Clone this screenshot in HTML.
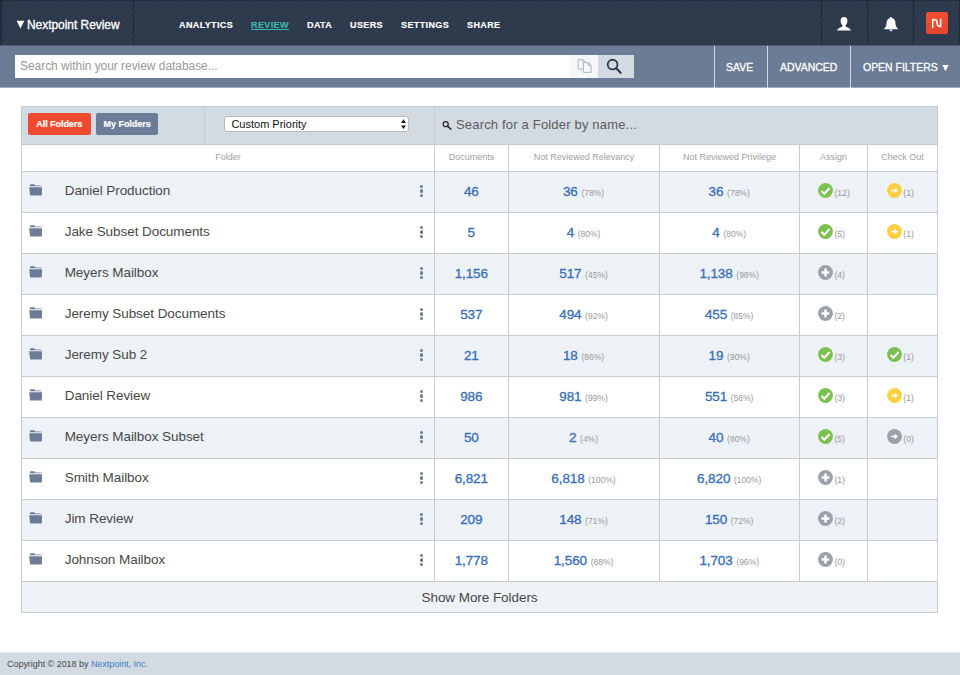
<!DOCTYPE html>
<html>
<head>
<meta charset="utf-8">
<title>Nextpoint Review</title>
<style>
*{box-sizing:border-box;margin:0;padding:0}
html,body{width:960px;height:675px;overflow:hidden;background:#fff;font-family:"Liberation Sans",sans-serif;color:#444}
body{position:relative}
#topbar{position:absolute;left:0;top:0;width:960px;height:46px;background-color:#2f3b4e;overflow:hidden}
#topbar .stripes{position:absolute;left:0;top:0;width:960px;height:46px}
#topbar .edge-t{position:absolute;left:0;top:0;width:960px;height:1px;background:rgba(20,26,36,.4)}
#topbar .edge-l{position:absolute;left:0;top:0;width:2px;height:46px;background:rgba(20,26,36,.45)}
#topbar .edge-b{position:absolute;left:0;top:45px;width:960px;height:1px;background:#4d5a70}
#topbar .div{position:absolute;top:0;width:1px;height:45px;background:rgba(22,29,40,.55)}
#brand{position:absolute;left:27px;top:16.5px;font-size:13px;line-height:16px;color:#fff;white-space:nowrap;-webkit-text-stroke:.35px #fff;transform:scaleX(.915);transform-origin:0 0}
#brand b{font-size:10px;letter-spacing:0;margin-right:3px;position:relative;top:-1px;-webkit-text-stroke:0}
.nav{position:absolute;top:19.6px;-webkit-text-stroke:.15px;font-size:9px;line-height:11px;font-weight:bold;color:#fff;letter-spacing:.38px;white-space:nowrap}
.nav.on{color:#3fb8af;text-decoration:underline;text-underline-offset:1px}
#searchbar{position:absolute;left:0;top:46px;width:960px;height:42px;background:#6d7c96}
#searchbar .edge-b{position:absolute;left:0;top:41px;width:960px;height:1px;background:#a4aebe}
#sinput{position:absolute;left:15px;top:9px;width:554px;height:23px;background:#fff;font-size:12px;line-height:23px;color:#999;padding-left:5px;white-space:nowrap;letter-spacing:-.05px}
#scopy{position:absolute;left:569px;top:9px;width:29px;height:23px;background:#f6f7f8}
#sbtn{position:absolute;left:598px;top:9px;width:36px;height:23px;background:#d2dbe2}
.sdiv{position:absolute;top:0;width:1px;height:42px;background:#d3d8e0}
.sb{position:absolute;top:14px;font-size:11px;line-height:14px;color:#fff;white-space:nowrap;-webkit-text-stroke:.3px #fff;transform:scaleX(.95);transform-origin:0 0}
#tool{position:absolute;left:21px;top:106px;width:917px;height:39px;background:#d2dbe2;border:1px solid #c6c9cd}
.vl{position:absolute;width:1px;background:#c9cbce}
.hl{position:absolute;height:1px;background:#c9cbce}
.btn{position:absolute;top:112.5px;height:22px;border-radius:2px;color:#fff;font-size:9px;font-weight:bold;line-height:22px;text-align:center;white-space:nowrap;letter-spacing:-.05px;-webkit-text-stroke:.2px #fff}
#sel{position:absolute;left:224.4px;top:116px;width:184.6px;height:15.6px;background:#fff;border:1px solid #b9b9b9;border-radius:3px;font-size:11px;line-height:14px;color:#111;padding-left:6px}
#fsearch{position:absolute;left:456px;top:116px;font-size:13px;line-height:18px;color:#5c5c5c;white-space:nowrap;letter-spacing:.18px}
.hd{position:absolute;top:144px;height:26px;font-size:9px;line-height:26px;color:#a0a0a0;text-align:center;white-space:nowrap}
.row{position:absolute;left:21px;width:917px;height:42px;border:1px solid #c9cbce;border-bottom:none}
.row.odd{background:#edf2f7}
.row .name{position:absolute;left:42.7px;top:10px;font-size:13.5px;line-height:17px;color:#484848;white-space:nowrap;letter-spacing:-.06px}
.row .c{position:absolute;top:0;height:40px;line-height:39px;text-align:center;white-space:nowrap;font-size:13.5px;color:#3a6eb5;letter-spacing:-.1px;-webkit-text-stroke:.32px #3a6eb5}
.row .c small{font-size:8.5px;color:#999;letter-spacing:0;-webkit-text-stroke:0}
.row .n{position:absolute;top:15.5px;font-size:8.7px;line-height:11px;color:#999;white-space:nowrap}
.row .ic{position:absolute;top:11px}
.c1{left:412.3px;width:74px}.c2{left:486px;width:151px}.c3{left:637.2px;width:140px}
.h0{left:22px;width:412px}.h1{left:435px;width:73px}.h2{left:509px;width:150px}.h3{left:660px;width:139px}.h4{left:800px;width:67px}.h5{left:868px;width:69px}
.fold{position:absolute;left:6.9px;top:12.2px}
.dots{position:absolute;left:397.5px;top:12.7px;width:3px}
.dots i{display:block;width:3.1px;height:3.1px;border-radius:50%;background:#6d7c96;margin-bottom:1.64px}
#more{position:absolute;left:21px;top:581px;width:917px;height:32px;background:#edf2f7;border:1px solid #c9cbce;text-align:center;font-size:13.5px;line-height:32.6px;color:#484848;letter-spacing:-.06px}
#foot{position:absolute;left:0;top:652px;width:960px;height:23px;background:#d2dbe2;font-size:9px;line-height:24px;color:#484848;padding-left:7px;white-space:nowrap;letter-spacing:-.04px}
#foot span{color:#417bbf}
</style>
</head>
<body>
<svg width="0" height="0" style="position:absolute">
<defs>
<pattern id="stripe" width="6" height="6" patternUnits="userSpaceOnUse" patternTransform="translate(3,0)"><path d="M-1 7 L7 -1 M-1 1 L1 -1 M5 7 L7 5" stroke="#1f2836" stroke-opacity=".45" stroke-width="1"/></pattern>
<g id="i-check"><circle cx="7.5" cy="7.5" r="7.4" fill="#7cc04f"/><path d="M3.5 8 L6.3 10.7 L11.6 5" fill="none" stroke="#fff" stroke-width="2"/></g>
<g id="i-plus"><circle cx="7.5" cy="7.5" r="7.4" fill="#9ba1a9"/><path d="M7.5 3.6 V11.4 M3.6 7.5 H11.4" fill="none" stroke="#fff" stroke-width="2.4"/></g>
<g id="i-arrow"><circle cx="7.5" cy="7.5" r="7.4" fill="#fdcf41"/><path d="M4.1 7.5 H8.6" stroke="#fff" stroke-width="1.6"/><path d="M7.6 4.7 L11.1 7.5 L7.6 10.3 Z" fill="#fff"/></g>
<g id="i-garrow"><circle cx="7.5" cy="7.5" r="7.4" fill="#9ba1a9"/><path d="M4.1 7.5 H8.6" stroke="#fff" stroke-width="1.6"/><path d="M7.6 4.7 L11.1 7.5 L7.6 10.3 Z" fill="#fff"/></g>
<g id="i-folder"><path d="M1 2.1 V1.2 Q1 0.3 1.9 0.3 H5.2 Q6 0.3 6.2 1 L6.3 1.3 H12.2 Q13 1.3 13 2.1 Z M0.2 3 H13.8 L13.3 10 Q13.2 10.8 12.4 10.8 H1.9 Q1.1 10.8 1 10 Z" fill="#6d7c96"/></g>
</defs></svg>
<div id="topbar">
 <svg class="stripes" width="960" height="46"><rect width="960" height="46" fill="url(#stripe)"/></svg>
 <div class="edge-t"></div><div class="edge-l"></div><div class="edge-l" style="left:958.5px"></div><div class="edge-b"></div>
 <div class="div" style="left:133px"></div>
 <div class="div" style="left:821px"></div>
 <div class="div" style="left:867px"></div>
 <div class="div" style="left:913px"></div>
 <svg style="position:absolute;left:16px;top:20px" width="9" height="9" viewBox="0 0 9 9"><path d="M0.6 0.8 H8.3 L4.45 8.4 Z" fill="#fff"/></svg>
 <div id="brand">Nextpoint Review</div>
 <div class="nav" style="left:179px">ANALYTICS</div>
 <div class="nav on" style="left:251px">REVIEW</div>
 <div class="nav" style="left:307px">DATA</div>
 <div class="nav" style="left:350px">USERS</div>
 <div class="nav" style="left:401px">SETTINGS</div>
 <div class="nav" style="left:467px">SHARE</div>
 <svg style="position:absolute;left:837.1px;top:16.7px" width="14" height="14" viewBox="0 0 14 14"><path d="M7 0 C9.2 0 10.5 1.6 10.4 4 C10.3 6 9.5 7.4 8.6 8.2 C8.4 9.2 8.8 9.7 10 10.2 C11.8 10.9 13.4 11.6 13.9 13.6 H0.1 C0.6 11.6 2.2 10.9 4 10.2 C5.2 9.7 5.6 9.2 5.4 8.2 C4.5 7.4 3.7 6 3.6 4 C3.5 1.6 4.8 0 7 0 Z" fill="#fff"/></svg>
 <svg style="position:absolute;left:883.7px;top:16.5px" width="14" height="15" viewBox="0 0 14 15"><path d="M7 0.1 C7.6 0.1 8 0.5 8 1.1 C10.2 1.6 11.4 3.5 11.5 6 C11.6 9.2 12.2 10.2 13.8 11.3 V12.2 H0.2 V11.3 C1.8 10.2 2.4 9.2 2.5 6 C2.6 3.5 3.8 1.6 6 1.1 C6 0.5 6.4 0.1 7 0.1 Z M5.6 12.8 H8.4 C8.4 13.7 7.8 14.3 7 14.3 C6.2 14.3 5.6 13.7 5.6 12.8 Z" fill="#fff"/></svg>
 <div style="position:absolute;left:926px;top:12px;width:22px;height:22px;border-radius:2.5px;background:linear-gradient(#f14c30 0,#f14c30 50%,#e5482c 50%,#e5482c 100%)"></div>
 <svg style="position:absolute;left:926px;top:12px" width="22" height="22" viewBox="0 0 22 22"><path d="M6.7 15.8 V6.9 M6.7 7.3 L10.6 8.3 L11.6 13.5 L14.6 14.7 M14.6 15.3 V6.8" fill="none" stroke="#fff" stroke-width="1.5" stroke-linejoin="miter"/></svg>
</div>
<div id="searchbar">
 <div class="edge-b"></div>
 <div id="sinput">Search within your review database...</div>
 <div id="scopy"><svg style="position:absolute;left:7.5px;top:4.2px" width="16" height="15" viewBox="0 0 16 15"><path d="M1.1 0.6 H6.2 L8.7 3.1 V10 H1.1 Z M5.9 0.6 V3.4 H8.7" fill="#f6f7f8" stroke="#adb6c5" stroke-width="1"/><path d="M6.4 3.6 H11.6 L14.1 6.1 V13.4 H6.4 Z M11.3 3.6 V6.4 H14.1" fill="#f6f7f8" stroke="#adb6c5" stroke-width="1"/></svg></div>
 <div id="sbtn"><svg style="position:absolute;left:8.3px;top:2.5px" width="17" height="17" viewBox="0 0 17 17"><circle cx="6.6" cy="6.6" r="4.85" fill="none" stroke="#2f3b4e" stroke-width="1.8"/><path d="M10.2 10.3 L14.6 14.8" stroke="#2f3b4e" stroke-width="2.2" stroke-linecap="round"/></svg></div>
 <div class="sdiv" style="left:714px"></div>
 <div class="sdiv" style="left:767px"></div>
 <div class="sdiv" style="left:850px"></div>
 <div class="sb" style="left:726px">SAVE</div>
 <div class="sb" style="left:779.5px">ADVANCED</div>
 <div class="sb" style="left:862.5px">OPEN FILTERS <span style="font-size:10.5px;letter-spacing:0;-webkit-text-stroke:0;position:relative;top:0">&#9660;</span></div>
</div>
<div id="tool"></div>
<div class="btn" style="left:27.5px;width:63.5px;background:#f04b2f">All Folders</div>
<div class="btn" style="left:96.2px;width:61.8px;background:#6d7c96">My Folders</div>
<div class="vl" style="left:204px;top:107px;height:37px"></div>
<div id="sel">Custom Priority<svg style="position:absolute;left:175px;top:2.3px" width="7" height="11" viewBox="0 0 7 11"><path d="M3.5 0.3 L5.9 3.9 H1.1 Z M3.5 10.1 L5.9 6.5 H1.1 Z" fill="#111"/></svg></div>
<svg style="position:absolute;left:442px;top:120px" width="11" height="11" viewBox="0 0 11 11"><circle cx="3.7" cy="4.2" r="2.5" fill="none" stroke="#222" stroke-width="1.25"/><path d="M5.5 6.1 L8.9 9.2" stroke="#222" stroke-width="1.5" stroke-linecap="round"/></svg>
<div id="fsearch">Search for a Folder by name...</div>
<div class="hd h0">Folder</div>
<div class="hd h1">Documents</div>
<div class="hd h2">Not Reviewed Relevancy</div>
<div class="hd h3">Not Reviewed Privilege</div>
<div class="hd h4">Assign</div>
<div class="hd h5">Check Out</div>
<div class="vl" style="left:21px;top:144px;height:438px"></div>
<div class="vl" style="left:937px;top:144px;height:438px"></div>
<div class="row odd" style="top:171px"><svg class="fold" width="13.5" height="11.7" viewBox="0 0 14 11" preserveAspectRatio="none"><use href="#i-folder"/></svg><div class="name">Daniel Production</div><div class="dots"><i></i><i></i><i></i></div><div class="c c1">46</div><div class="c c2">36 <small>(78%)</small></div><div class="c c3">36 <small>(78%)</small></div><svg class="ic" style="left:795.6px" width="15" height="15" viewBox="0 0 15 15"><use href="#i-check"/></svg><div class="n" style="left:812.4px">(12)</div><svg class="ic" style="left:865px" width="15" height="15" viewBox="0 0 15 15"><use href="#i-arrow"/></svg><div class="n" style="left:881.3px">(1)</div></div>
<div class="row" style="top:212px"><svg class="fold" width="13.5" height="11.7" viewBox="0 0 14 11" preserveAspectRatio="none"><use href="#i-folder"/></svg><div class="name">Jake Subset Documents</div><div class="dots"><i></i><i></i><i></i></div><div class="c c1">5</div><div class="c c2">4 <small>(80%)</small></div><div class="c c3">4 <small>(80%)</small></div><svg class="ic" style="left:795.6px" width="15" height="15" viewBox="0 0 15 15"><use href="#i-check"/></svg><div class="n" style="left:812.4px">(5)</div><svg class="ic" style="left:865px" width="15" height="15" viewBox="0 0 15 15"><use href="#i-arrow"/></svg><div class="n" style="left:881.3px">(1)</div></div>
<div class="row odd" style="top:253px"><svg class="fold" width="13.5" height="11.7" viewBox="0 0 14 11" preserveAspectRatio="none"><use href="#i-folder"/></svg><div class="name">Meyers Mailbox</div><div class="dots"><i></i><i></i><i></i></div><div class="c c1">1,156</div><div class="c c2">517 <small>(45%)</small></div><div class="c c3">1,138 <small>(98%)</small></div><svg class="ic" style="left:795.6px" width="15" height="15" viewBox="0 0 15 15"><use href="#i-plus"/></svg><div class="n" style="left:812.4px">(4)</div></div>
<div class="row" style="top:294px"><svg class="fold" width="13.5" height="11.7" viewBox="0 0 14 11" preserveAspectRatio="none"><use href="#i-folder"/></svg><div class="name">Jeremy Subset Documents</div><div class="dots"><i></i><i></i><i></i></div><div class="c c1">537</div><div class="c c2">494 <small>(92%)</small></div><div class="c c3">455 <small>(85%)</small></div><svg class="ic" style="left:795.6px" width="15" height="15" viewBox="0 0 15 15"><use href="#i-plus"/></svg><div class="n" style="left:812.4px">(2)</div></div>
<div class="row odd" style="top:335px"><svg class="fold" width="13.5" height="11.7" viewBox="0 0 14 11" preserveAspectRatio="none"><use href="#i-folder"/></svg><div class="name">Jeremy Sub 2</div><div class="dots"><i></i><i></i><i></i></div><div class="c c1">21</div><div class="c c2">18 <small>(86%)</small></div><div class="c c3">19 <small>(90%)</small></div><svg class="ic" style="left:795.6px" width="15" height="15" viewBox="0 0 15 15"><use href="#i-check"/></svg><div class="n" style="left:812.4px">(3)</div><svg class="ic" style="left:865px" width="15" height="15" viewBox="0 0 15 15"><use href="#i-check"/></svg><div class="n" style="left:881.3px">(1)</div></div>
<div class="row" style="top:376px"><svg class="fold" width="13.5" height="11.7" viewBox="0 0 14 11" preserveAspectRatio="none"><use href="#i-folder"/></svg><div class="name">Daniel Review</div><div class="dots"><i></i><i></i><i></i></div><div class="c c1">986</div><div class="c c2">981 <small>(99%)</small></div><div class="c c3">551 <small>(56%)</small></div><svg class="ic" style="left:795.6px" width="15" height="15" viewBox="0 0 15 15"><use href="#i-check"/></svg><div class="n" style="left:812.4px">(3)</div><svg class="ic" style="left:865px" width="15" height="15" viewBox="0 0 15 15"><use href="#i-arrow"/></svg><div class="n" style="left:881.3px">(1)</div></div>
<div class="row odd" style="top:417px"><svg class="fold" width="13.5" height="11.7" viewBox="0 0 14 11" preserveAspectRatio="none"><use href="#i-folder"/></svg><div class="name">Meyers Mailbox Subset</div><div class="dots"><i></i><i></i><i></i></div><div class="c c1">50</div><div class="c c2">2 <small>(4%)</small></div><div class="c c3">40 <small>(80%)</small></div><svg class="ic" style="left:795.6px" width="15" height="15" viewBox="0 0 15 15"><use href="#i-check"/></svg><div class="n" style="left:812.4px">(5)</div><svg class="ic" style="left:865px" width="15" height="15" viewBox="0 0 15 15"><use href="#i-garrow"/></svg><div class="n" style="left:881.3px">(0)</div></div>
<div class="row" style="top:458px"><svg class="fold" width="13.5" height="11.7" viewBox="0 0 14 11" preserveAspectRatio="none"><use href="#i-folder"/></svg><div class="name">Smith Mailbox</div><div class="dots"><i></i><i></i><i></i></div><div class="c c1">6,821</div><div class="c c2">6,818 <small>(100%)</small></div><div class="c c3">6,820 <small>(100%)</small></div><svg class="ic" style="left:795.6px" width="15" height="15" viewBox="0 0 15 15"><use href="#i-plus"/></svg><div class="n" style="left:812.4px">(1)</div></div>
<div class="row odd" style="top:499px"><svg class="fold" width="13.5" height="11.7" viewBox="0 0 14 11" preserveAspectRatio="none"><use href="#i-folder"/></svg><div class="name">Jim Review</div><div class="dots"><i></i><i></i><i></i></div><div class="c c1">209</div><div class="c c2">148 <small>(71%)</small></div><div class="c c3">150 <small>(72%)</small></div><svg class="ic" style="left:795.6px" width="15" height="15" viewBox="0 0 15 15"><use href="#i-plus"/></svg><div class="n" style="left:812.4px">(2)</div></div>
<div class="row" style="top:540px"><svg class="fold" width="13.5" height="11.7" viewBox="0 0 14 11" preserveAspectRatio="none"><use href="#i-folder"/></svg><div class="name">Johnson Mailbox</div><div class="dots"><i></i><i></i><i></i></div><div class="c c1">1,778</div><div class="c c2">1,560 <small>(88%)</small></div><div class="c c3">1,703 <small>(96%)</small></div><svg class="ic" style="left:795.6px" width="15" height="15" viewBox="0 0 15 15"><use href="#i-plus"/></svg><div class="n" style="left:812.4px">(0)</div></div>
<div class="vl" style="left:434px;top:107px;height:474px"></div>
<div class="vl" style="left:508px;top:145px;height:436px"></div>
<div class="vl" style="left:659px;top:145px;height:436px"></div>
<div class="vl" style="left:799px;top:145px;height:436px"></div>
<div class="vl" style="left:867px;top:145px;height:436px"></div>
<div id="more">Show More Folders</div>
<div style="position:absolute;left:0;top:652px;width:960px;height:1px;background:#e9edf1;z-index:2"></div>
<div id="foot">Copyright &copy; 2018 by <span>Nextpoint, Inc.</span></div>
</body>
</html>
